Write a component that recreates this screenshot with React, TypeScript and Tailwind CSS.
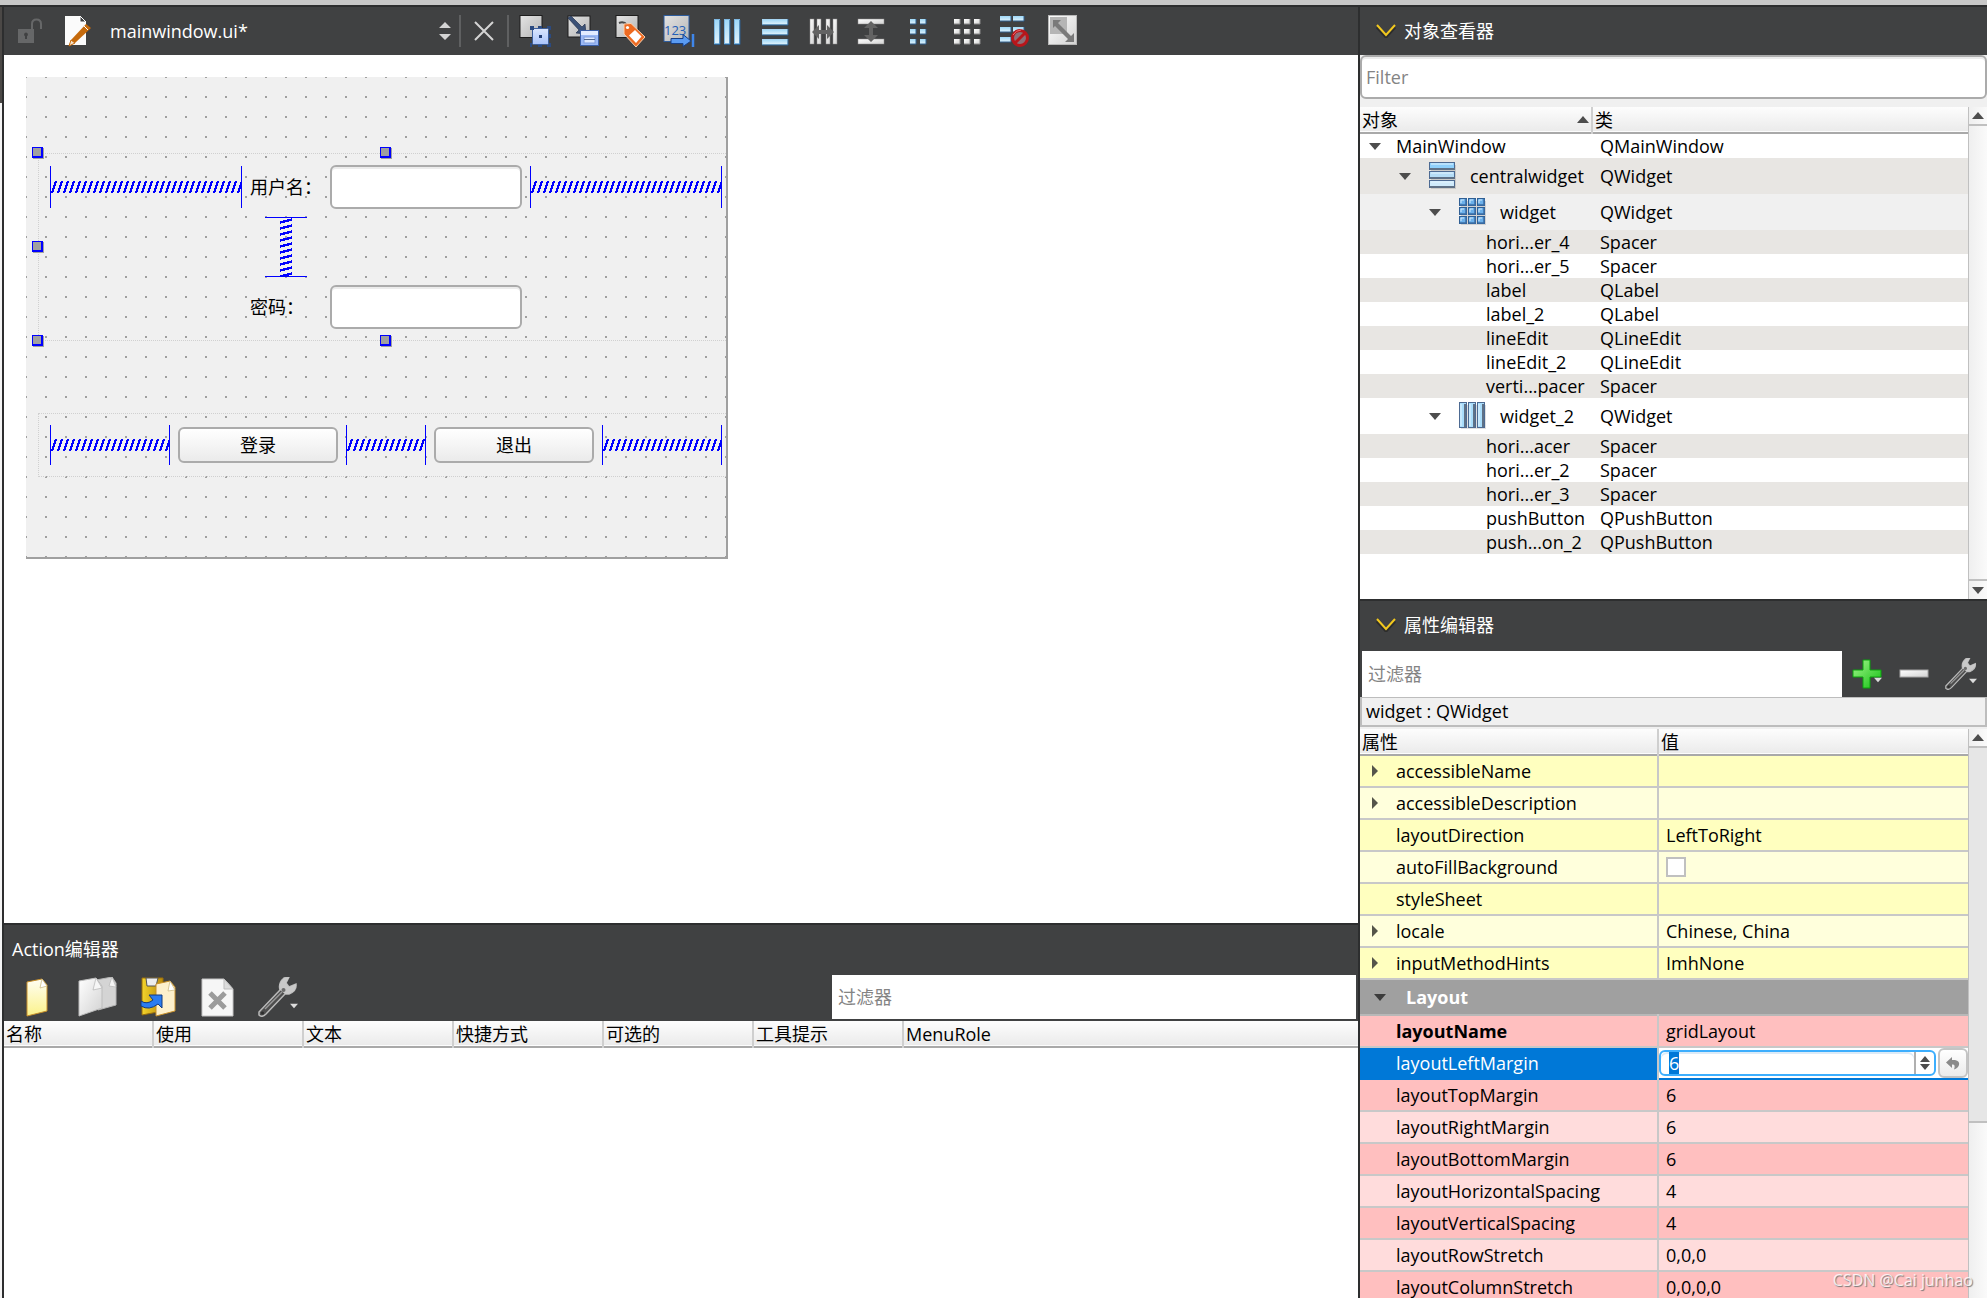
import { useEffect, useRef } from "react";

interface TreeItem {
  name: string;
  type: string;
  level: number;
  icon?: "rows" | "grid" | "cols";
}

interface Property {
  name: string;
  value: string;
  expandable?: boolean;
  kind?: "check";
}

const treeItems: TreeItem[] = [
  { name: "MainWindow", type: "QMainWindow", level: 0 },
  { name: "centralwidget", type: "QWidget", level: 1, icon: "rows" },
  { name: "widget", type: "QWidget", level: 2, icon: "grid" },
  { name: "hori...er_4", type: "Spacer", level: 3 },
  { name: "hori...er_5", type: "Spacer", level: 3 },
  { name: "label", type: "QLabel", level: 3 },
  { name: "label_2", type: "QLabel", level: 3 },
  { name: "lineEdit", type: "QLineEdit", level: 3 },
  { name: "lineEdit_2", type: "QLineEdit", level: 3 },
  { name: "verti...pacer", type: "Spacer", level: 3 },
  { name: "widget_2", type: "QWidget", level: 2, icon: "cols" },
  { name: "hori...acer", type: "Spacer", level: 3 },
  { name: "hori...er_2", type: "Spacer", level: 3 },
  { name: "hori...er_3", type: "Spacer", level: 3 },
  { name: "pushButton", type: "QPushButton", level: 3 },
  { name: "push...on_2", type: "QPushButton", level: 3 },
];

const widgetProps: Property[] = [
  { name: "accessibleName", value: "", expandable: true },
  { name: "accessibleDescription", value: "", expandable: true },
  { name: "layoutDirection", value: "LeftToRight" },
  { name: "autoFillBackground", value: "", kind: "check" },
  { name: "styleSheet", value: "" },
  { name: "locale", value: "Chinese, China", expandable: true },
  { name: "inputMethodHints", value: "ImhNone", expandable: true },
];

const layoutProps: Property[] = [
  { name: "layoutTopMargin", value: "6" },
  { name: "layoutRightMargin", value: "6" },
  { name: "layoutBottomMargin", value: "6" },
  { name: "layoutHorizontalSpacing", value: "4" },
  { name: "layoutVerticalSpacing", value: "4" },
  { name: "layoutRowStretch", value: "0,0,0" },
  { name: "layoutColumnStretch", value: "0,0,0,0" },
];

const actionColumns = ["名称", "使用", "文本", "快捷方式", "可选的", "工具提示"];

const HEADER = "h-[26px] bg-linear-to-b from-[#fdfdfd] to-[#ebebeb] border-b-2 border-[#a9a9a9]";

/* ---------- small glyphs ---------- */

function Triangle({ dir, className = "" }: { dir: "up" | "down" | "right"; className?: string }) {
  if (dir === "right") {
    return (
      <svg width="6" height="12" viewBox="0 0 6 12" className={className}>
        <path d="M0 0L6 6L0 12Z" fill="currentColor" />
      </svg>
    );
  }
  return (
    <svg width="12" height="7" viewBox="0 0 12 7" className={className}>
      <path d={dir === "up" ? "M0 7L6 0L12 7Z" : "M0 0H12L6 7Z"} fill="currentColor" />
    </svg>
  );
}

function Chevron() {
  return (
    <svg width="20" height="14" viewBox="0 0 20 14" fill="none">
      <path d="M1 2L10 12L19 2" stroke="#2c2c2c" strokeWidth="3" transform="translate(0 1)" />
      <path d="M1 1L10 11L19 1" stroke="#f2c81e" strokeWidth="2" />
    </svg>
  );
}

function Defs() {
  return (
    <svg width="0" height="0" className="absolute" aria-hidden="true">
      <defs>
        <linearGradient id="blueBar" x1="0" y1="0" x2="0" y2="1">
          <stop offset="0" stopColor="#9fd8f8" />
          <stop offset="1" stopColor="#e2f3fc" />
        </linearGradient>
        <linearGradient id="greyBox" x1="0" y1="0" x2="1" y2="1">
          <stop offset="0" stopColor="#e4e4e4" />
          <stop offset="1" stopColor="#b4b4b4" />
        </linearGradient>
        <linearGradient id="lightBox" x1="0" y1="0" x2="1" y2="1">
          <stop offset="0" stopColor="#ffffff" />
          <stop offset="1" stopColor="#d2d2d2" />
        </linearGradient>
        <linearGradient id="blueBox" x1="0" y1="0" x2="0" y2="1">
          <stop offset="0" stopColor="#dbe6fd" />
          <stop offset="1" stopColor="#a9c3fb" />
        </linearGradient>
        <linearGradient id="yellowPage" x1="0" y1="0" x2="0" y2="1">
          <stop offset="0" stopColor="#fffef4" />
          <stop offset="1" stopColor="#fbf28a" />
        </linearGradient>
        <linearGradient id="gold" x1="0" y1="0" x2="1" y2="0">
          <stop offset="0" stopColor="#f4d42c" />
          <stop offset="1" stopColor="#b98a0a" />
        </linearGradient>
        <linearGradient id="green" x1="0" y1="0" x2="1" y2="1">
          <stop offset="0" stopColor="#a4f58c" />
          <stop offset="1" stopColor="#0fbf10" />
        </linearGradient>
        <pattern id="hatchH" width="6" height="12" patternUnits="userSpaceOnUse">
          <path d="M1 12L5 0" stroke="#0000ff" strokeWidth="2" shapeRendering="crispEdges" />
        </pattern>
        <pattern id="hatchV" width="12" height="6" patternUnits="userSpaceOnUse">
          <path d="M0 4.5L12 1.5" stroke="#0000ff" strokeWidth="2.5" shapeRendering="crispEdges" />
        </pattern>
      </defs>
    </svg>
  );
}

/* ---------- form toolbar icons, all 32x32 ---------- */

function EditWidgetsIcon() {
  return (
    <>
      <rect x="1" y="0.5" width="22" height="22" fill="url(#greyBox)" stroke="#1d1d1d" />
      <rect x="13.5" y="13.5" width="16" height="16" rx="1" fill="url(#blueBox)" stroke="#3d5f9c" />
      <path
        d="M11 11h4v4h-4zM19 11h4v2h-4zM28 11h4v4h-2v-2h-2zM30 19h2v4h-2zM11 28h2v4h-2zM19 30h4v2h-4zM28 30h2v-2h2v4h-4z"
        fill="#2b4a80"
      />
      <rect x="20" y="20" width="3" height="3" fill="#223e75" />
    </>
  );
}

function SignalsIcon() {
  return (
    <>
      <rect x="1" y="1" width="22" height="21" fill="url(#greyBox)" stroke="#1d1d1d" />
      <path d="M1 3L4 1L15 12L18 9L19 19L9 18L12 15Z" fill="#3c5277" stroke="#26344f" strokeWidth="0.7" />
      <rect x="13.5" y="15.5" width="18" height="15" fill="#9bb8f4" stroke="#3a5ea6" />
      <rect x="14" y="16" width="17" height="4" fill="#e2ebff" />
      <rect x="17" y="22" width="11" height="6" fill="#dde7fd" stroke="#7f9dde" />
      <path d="M17 24.5H28" stroke="#52688f" />
    </>
  );
}

function BuddiesIcon() {
  return (
    <>
      <rect x="1" y="0.5" width="22" height="22" fill="url(#greyBox)" stroke="#1d1d1d" />
      <path d="M4 8Q9 6 12 10V19" stroke="#4a4a4a" strokeWidth="2" fill="none" />
      <path d="M9 9L16 8.5L30 22L21 32L9 19Z" fill="#ee6a21" stroke="#fbd0ae" />
      <path d="M20 15L26.5 21.5L21 28L14 20.5Z" fill="#fff" />
      <circle cx="12.5" cy="12.5" r="1.6" fill="#fff" />
    </>
  );
}

function TabOrderIcon() {
  return (
    <>
      <rect x="1" y="0.5" width="25" height="26" fill="url(#greyBox)" stroke="#2e5d9e" />
      <text x="1" y="20" fontSize="13" fill="#2360b8" fontFamily="Open Sans, sans-serif">
        123
      </text>
      <path d="M8 23.5H20V19.5L28 26L20 31.5V28.5H8Z" fill="#5a9bf2" stroke="#173f86" />
      <path d="M30 19V32" stroke="#3f86ea" strokeWidth="2.5" />
    </>
  );
}

function ColumnsIcon() {
  return (
    <>
      {[3, 13, 23].map((x) => (
        <g key={x}>
          <rect x={x + 0.5} y="4.5" width="5" height="24" fill="url(#blueBar)" stroke="#7fb9e4" />
          <path d={`M${x + 6} 5V29.5H${x}`} stroke="#2e608f" fill="none" />
        </g>
      ))}
    </>
  );
}

function RowsIcon() {
  return (
    <>
      {[4, 14, 24].map((y) => (
        <g key={y}>
          <rect x="3.5" y={y + 0.5} width="25" height="5" fill="url(#blueBar)" stroke="#a7d5f2" />
          <path d={`M29 ${y}V${y + 6}H3`} stroke="#2e608f" fill="none" />
        </g>
      ))}
    </>
  );
}

function SplitHIcon() {
  return (
    <>
      {[3, 10, 19, 26].map((x) => (
        <rect key={x} x={x} y="4" width="4" height="25" fill="url(#lightBox)" stroke="#8d8d8d" strokeWidth="0.5" />
      ))}
      <path d="M5 17L12 10V15H20V10L27 17L20 24V19H12V24Z" fill="#636363" />
    </>
  );
}

function SplitVIcon() {
  return (
    <>
      {[4, 24].map((y) => (
        <rect key={y} x="3" y={y} width="26" height="5" fill="url(#lightBox)" stroke="#8d8d8d" strokeWidth="0.5" />
      ))}
      <path d="M16 6L23 13H18V20H23L16 27L9 20H14V13H9Z" fill="#636363" />
    </>
  );
}

function Cells({ xs, ys, w, h, fill, edge }: { xs: number[]; ys: number[]; w: number; h: number; fill: string; edge: string }) {
  return (
    <>
      {ys.map((y) =>
        xs.map((x) => (
          <g key={`${x}-${y}`}>
            <rect x={x} y={y} width={w} height={h} fill={fill} />
            <path d={`M${x + w} ${y}V${y + h}H${x}`} stroke={edge} fill="none" />
          </g>
        ))
      )}
    </>
  );
}

function BreakLayoutIcon() {
  return (
    <>
      <Cells xs={[1, 14]} ys={[1, 12, 22]} w={11} h={5} fill="url(#blueBar)" edge="#2e608f" />
      <circle cx="21" cy="23" r="7.5" fill="#8d6f78" stroke="#b8161b" strokeWidth="3" />
      <path d="M16 28L26 18" stroke="#b8161b" strokeWidth="3" />
      <path d="M14 20Q17 15 22 15" stroke="#ee6a6a" strokeWidth="1" fill="none" />
    </>
  );
}

function AdjustSizeIcon() {
  return (
    <>
      <rect x="1.5" y="0.5" width="28" height="29" fill="url(#lightBox)" stroke="#b9b9b9" />
      <rect x="3" y="2" width="17" height="17" fill="#b5b5b5" />
      <path d="M6 5H14L11 8L24 21L27 18V27H18L21 24L8 11L6 13Z" fill="#7a7a7a" />
    </>
  );
}

const formTools = [
  { label: "编辑控件", icon: <EditWidgetsIcon /> },
  { label: "编辑信号/槽", icon: <SignalsIcon /> },
  { label: "编辑伙伴", icon: <BuddiesIcon /> },
  { label: "编辑Tab顺序", icon: <TabOrderIcon /> },
  { label: "水平布局", icon: <ColumnsIcon /> },
  { label: "垂直布局", icon: <RowsIcon /> },
  { label: "水平分裂器布局", icon: <SplitHIcon /> },
  { label: "垂直分裂器布局", icon: <SplitVIcon /> },
  {
    label: "表单布局",
    icon: <Cells xs={[7, 17]} ys={[4, 14, 24]} w={6} h={5} fill="url(#blueBar)" edge="#2e608f" />,
  },
  {
    label: "栅格布局",
    icon: <Cells xs={[3, 13, 23]} ys={[4, 14, 24]} w={6} h={5} fill="url(#lightBox)" edge="#8a8a8a" />,
  },
  { label: "打破布局", icon: <BreakLayoutIcon /> },
  { label: "调整大小", icon: <AdjustSizeIcon /> },
];

function Wrench({ size }: { size: number }) {
  return (
    <svg width={size} height={size} viewBox="0 0 40 40">
      <path
        d="M1 35L22 13Q20 6 26 1L31 0L28 6L31 10L38 7Q39 14 31 17L27 17L8 37Q4 41 1 38Z"
        fill="#4d4d4d"
        stroke="#b9b9b9"
        strokeWidth="1.5"
      />
      <path d="M22 13Q20 6 26 1L31 0L28 6L31 10L38 7Q39 14 31 17L27 17Z" fill="#c9c9c9" />
      <path d="M7 32L24 15" stroke="#9a9a9a" strokeWidth="1.5" />
      <circle cx="25.5" cy="13" r="2" fill="#6a6a6a" />
      <circle cx="4.5" cy="36" r="1.5" fill="#2c2c2c" />
    </svg>
  );
}

function NewActionIcon() {
  return (
    <svg width="40" height="40" viewBox="0 0 40 40">
      <path d="M9 5L24 2L29 8V34L9 39Z" fill="url(#yellowPage)" stroke="#c8902a" />
      <path d="M24 2L22 11L29 9Z" fill="#fff" stroke="#c9b47a" strokeWidth="0.7" />
    </svg>
  );
}

function CopyIcon() {
  return (
    <svg width="40" height="40" viewBox="0 0 40 40">
      <path d="M18 3L34 0L38 6V28L20 33Z" fill="#d4d4d4" stroke="#b5b5b5" />
      <path d="M34 0L31 9L38 10Z" fill="#f4f4f4" stroke="#b5b5b5" strokeWidth="0.7" />
      <path d="M1 4L18 1L24 9V31L1 39Z" fill="url(#lightBox)" stroke="#bcbcbc" />
      <path d="M18 1L15 13L24 11Z" fill="#f6f6f6" stroke="#b5b5b5" strokeWidth="0.7" />
    </svg>
  );
}

function PasteIcon() {
  return (
    <svg width="40" height="40" viewBox="0 0 40 40">
      <path d="M4 1L25 1V34L4 38Z" fill="url(#gold)" stroke="#9a6f0c" />
      <path d="M8 1H20L18 9H9Z" fill="#ececec" stroke="#555" />
      <path d="M18 7L32 4L37 10V34L18 39Z" fill="#fdf0cc" stroke="#c8902a" />
      <path d="M32 4L30 14L37 13Z" fill="#fff" stroke="#c9b47a" strokeWidth="0.7" />
      <path d="M3 24Q9 28 15 23L11 18H24V31L20 27Q11 34 3 29Z" fill="#2b7cf0" stroke="#123b80" />
    </svg>
  );
}

function DeleteIcon() {
  return (
    <svg width="40" height="40" viewBox="0 0 40 40">
      <path d="M4 2H26L35 12V39H4Z" fill="#f6f6f6" stroke="#c4c4c4" />
      <path d="M26 2V12H35Z" fill="#dcdcdc" stroke="#bdbdbd" />
      <path d="M12 16L27 31M27 16L12 31" stroke="#9b9b9b" strokeWidth="5" />
    </svg>
  );
}

function TreeIcon({ kind }: { kind: "rows" | "grid" | "cols" }) {
  return (
    <svg width="28" height="28" viewBox="0 0 28 28" className="shrink-0">
      <rect x="2" y="3" width="25" height="24" fill="#000" fillOpacity="0.12" />
      {kind === "rows" &&
        [0, 9, 18].map((y, i) => (
          <g key={y}>
            <rect x="0.5" y={y + 0.5} width="25" height="7" fill={["#8fd0fb", "#b5ddf6", "#cfeafa"][i]} stroke="#4d6a92" />
            <path d={`M2 ${y + 2}H24`} stroke="#e3f4fe" />
            <path d={`M1 ${y + 7}H26`} stroke="#5f7186" strokeWidth="2" />
          </g>
        ))}
      {kind === "cols" &&
        [0, 9, 18].map((x) => (
          <g key={x}>
            <rect x={x + 0.5} y="0.5" width="7" height="25" fill="#a9ddfb" stroke="#4d6a92" />
            <path d={`M${x + 6} 2V25`} stroke="#5f7186" strokeWidth="2" />
            <path d={`M${x + 2} 2V24`} stroke="#e3f4fe" />
          </g>
        ))}
      {kind === "grid" &&
        [0, 9, 18].map((y) =>
          [0, 9, 18].map((x) => (
            <g key={`${x}-${y}`}>
              <rect x={x + 0.5} y={y + 0.5} width="7" height="7" fill="#6cb0ea" stroke="#2f5f94" />
              <path d={`M${x + 7} ${y + 1}V${y + 7}H${x + 1}`} stroke="#3b6ea5" strokeWidth="1.5" fill="none" />
              <path d={`M${x + 2} ${y + 5}V${y + 2}H${x + 5}`} stroke="#cfe9fc" fill="none" />
            </g>
          ))
        )}
    </svg>
  );
}

/* ---------- form canvas ---------- */

function HSpacer({ className = "" }: { className?: string }) {
  return (
    <div className={`flex items-center border-x border-[#0000ff] ${className}`}>
      <svg className="w-full h-3">
        <rect width="100%" height="12" fill="url(#hatchH)" />
      </svg>
    </div>
  );
}

function VSpacer() {
  return (
    <div className="flex w-[42px] h-[60px] justify-center justify-self-center border-y border-[#0000ff]">
      <svg className="h-full w-3">
        <rect width="12" height="100%" fill="url(#hatchV)" />
      </svg>
    </div>
  );
}

function Handle({ className }: { className: string }) {
  return (
    <div
      className={`absolute size-[11px] border border-r-2 border-b-2 border-[#0000ff] bg-[#a0a0a0] shadow-[1px_1px_0_#a0a0a0] ${className}`}
    />
  );
}

function LineEdit({ label, id }: { label: string; id: string }) {
  return (
    <>
      <label htmlFor={id} className="self-center whitespace-nowrap">
        {label}
      </label>
      <input
        id={id}
        type="text"
        className="h-11 w-full rounded-md border-2 border-[#ababab] bg-white px-2 shadow-[inset_0_2px_0_#ececec] outline-none"
      />
    </>
  );
}

function PushButton({ children }: { children: string }) {
  return (
    <button
      type="button"
      className="h-9 w-40 rounded-md border-2 border-[#ababab] bg-linear-to-b from-white to-[#ebebeb]"
    >
      {children}
    </button>
  );
}

function FormPreview() {
  return (
    <div className="w-[702px] overflow-hidden border-r-2 border-b-2 border-[#a0a0a0] bg-[#f0f0f0] bg-[conic-gradient(at_2px_2px,transparent_75%,#a0a0a0_0)] bg-size-[20px_20px] bg-position-[-1px_-1px] pt-[76px] pb-20 pl-3">
      <div className="relative w-[694px] border border-dotted border-[#d0d0d0] py-[11px] pl-[11px]">
        <div className="grid grid-cols-[192px_72px_192px_192px] gap-2">
          <HSpacer className="h-[42px] self-center" />
          <LineEdit label="用户名：" id="user-name" />
          <HSpacer className="h-[42px] self-center" />
          <div />
          <VSpacer />
          <div />
          <div />
          <div />
          <LineEdit label="密码：" id="user-password" />
        </div>
        <Handle className="-top-[7px] -left-[7px]" />
        <Handle className="-top-[7px] left-[341px]" />
        <Handle className="top-[87px] -left-[7px]" />
        <Handle className="-bottom-[6px] -left-[7px]" />
        <Handle className="-bottom-[6px] left-[341px]" />
      </div>
      <div className="mt-[72px] flex w-[694px] items-center gap-2 border border-dotted border-[#d0d0d0] py-[11px] pl-[11px]">
        <HSpacer className="h-10 w-[120px]" />
        <PushButton>登录</PushButton>
        <HSpacer className="h-10 w-20" />
        <PushButton>退出</PushButton>
        <HSpacer className="h-10 w-[120px]" />
      </div>
    </div>
  );
}

function FormToolbar() {
  return (
    <div className="flex h-12 shrink-0 items-center bg-[#404142]" role="toolbar">
      <button type="button" aria-label="锁定" className="ml-3.5">
        <svg width="26" height="26" viewBox="0 0 26 26">
          <path d="M14 12V6Q14 1.5 18.5 1.5T23 6V11" stroke="#666768" strokeWidth="2" fill="none" />
          <path d="M0 11H16V25H0ZM8 14.5a2 2 0 0 0-1 3.7V21h2v-2.8a2 2 0 0 0-1-3.7Z" fill="#666768" fillRule="evenodd" />
        </svg>
      </button>
      <svg width="30" height="32" viewBox="0 0 30 32" className="ml-5">
        <path d="M1 1H16L22 7V30H1Z" fill="#fbfbfb" />
        <path d="M16 1V7H22Z" fill="#404142" stroke="#fff" />
        <path d="M5 31L7 25L22 9L27 13L11 28Z" fill="#c56a0c" />
        <path d="M5 31L7 25L11 28Z" fill="#f6e4cc" stroke="#c56a0c" />
        <path d="M20 11L24 15" stroke="#fff" />
      </svg>
      <button type="button" className="ml-4 flex flex-1 max-w-[341px] items-center justify-between text-white">
        mainwindow.ui*
        <svg width="12" height="20" viewBox="0 0 12 20">
          <path d="M0 7L6 1L12 7ZM0 13H12L6 19Z" fill="#d4d4d4" />
        </svg>
      </button>
      <div className="ml-2 h-8 w-0.5 bg-[#5f6061]" />
      <button type="button" aria-label="关闭" className="ml-3">
        <svg width="22" height="22" viewBox="0 0 22 22">
          <path d="M2 2L20 20M20 2L2 20" stroke="#d4d4d4" strokeWidth="2" />
        </svg>
      </button>
      <div className="ml-3 h-8 w-0.5 bg-[#5f6061]" />
      <div className="ml-2.5 flex gap-4">
        {formTools.map((tool) => (
          <button key={tool.label} type="button" aria-label={tool.label}>
            <svg width="32" height="32" viewBox="0 0 32 32">
              {tool.icon}
            </svg>
          </button>
        ))}
      </div>
    </div>
  );
}

function ActionEditor() {
  return (
    <section className="flex h-[375px] shrink-0 flex-col border-t-2 border-[#2d2e2f] bg-white">
      <div className="bg-[#404142]">
        <h2 className="flex h-12 items-center pl-2 text-white">Action编辑器</h2>
        <div className="flex h-12 items-center justify-between">
          <div className="flex items-center gap-5 pl-3.5">
            <button type="button" aria-label="新建">
              <NewActionIcon />
            </button>
            <button type="button" aria-label="复制">
              <CopyIcon />
            </button>
            <button type="button" aria-label="粘贴">
              <PasteIcon />
            </button>
            <button type="button" aria-label="删除">
              <DeleteIcon />
            </button>
            <button type="button" aria-label="配置" className="flex items-end">
              <Wrench size={40} />
              <Triangle dir="down" className="-ml-2 mb-2 h-1.5 w-2 text-[#dcdcdc]" />
            </button>
          </div>
          <input
            type="text"
            aria-label="过滤器"
            placeholder="过滤器"
            className="mr-0.5 h-11 w-[524px] bg-white px-1.5 outline-none placeholder:text-[#848484]"
          />
        </div>
      </div>
      <table className="w-full table-fixed text-left">
        <thead>
          <tr className={HEADER}>
            {actionColumns.map((name) => (
              <th
                key={name}
                className="w-[150px] border-r-2 border-r-[#cfcfcf] pl-0.5 font-normal leading-6 first:w-[149px]"
              >
                {name}
              </th>
            ))}
            <th className="pl-0.5 font-normal leading-6">MenuRole</th>
          </tr>
        </thead>
      </table>
    </section>
  );
}

/* ---------- right docks ---------- */

function DockTitle({ children }: { children: string }) {
  return (
    <h2 className="flex h-12 shrink-0 items-center gap-2 bg-[#404142] pl-4 text-white">
      <Chevron />
      {children}
    </h2>
  );
}

function ScrollBar({ thumb }: { thumb?: boolean }) {
  return (
    <div className="flex w-[19px] shrink-0 flex-col items-center border-l border-[#c0c0c0] bg-linear-to-r from-[#efefef] to-[#fafafa] text-[#4d4d4d]">
      <div className="flex h-[19px] w-full shrink-0 items-center justify-center border-b-2 border-[#c0c0c0]">
        <Triangle dir="up" />
      </div>
      {thumb ? (
        <div className="h-[375px] w-full border-b-2 border-[#c0c0c0] bg-[#e6e6e6]" />
      ) : (
        <div className="mt-auto flex h-5 w-full items-center justify-center border-t-2 border-[#c0c0c0]">
          <Triangle dir="down" />
        </div>
      )}
    </div>
  );
}

const indents = ["pl-[9px]", "pl-[39px]", "pl-[69px]", "pl-[126px]"];

function rowColor(item: TreeItem, index: number) {
  if (item.name === "widget") return "bg-[#f0f0f0]";
  return index % 2 ? "bg-[#e8e6e3]" : "bg-white";
}

function ObjectInspector() {
  return (
    <section className="flex h-[592px] shrink-0 flex-col bg-[#f0f0f0]">
      <DockTitle>对象查看器</DockTitle>
      <input
        type="text"
        aria-label="Filter"
        placeholder="Filter"
        className="mb-2 h-11 shrink-0 rounded-md border-2 border-[#ababab] bg-white px-1 shadow-[inset_0_2px_0_#ececec] outline-none placeholder:text-[#848484]"
      />
      <div className="flex min-h-0 flex-1 bg-white">
        <div className="min-w-0 flex-1">
          <table className="w-full table-fixed text-left leading-6">
            <thead>
              <tr className={HEADER}>
                <th className="w-[232px] border-r-2 border-r-[#cfcfcf] pr-0.5 pl-0.5 font-normal">
                  <span className="flex items-center justify-between">
                    对象
                    <Triangle dir="up" className="text-[#4d4d4d]" />
                  </span>
                </th>
                <th className="pl-0.5 font-normal">类</th>
              </tr>
            </thead>
            <tbody>
              {treeItems.map((item, i) => (
                <tr key={item.name} className={`${item.icon ? "h-9" : "h-6"} ${rowColor(item, i)}`}>
                  <td className={`whitespace-nowrap ${indents[item.level]}`}>
                    <span className="flex items-center">
                      {item.level < 3 && <Triangle dir="down" className="mr-[15px] shrink-0 text-[#4d4d4d]" />}
                      {item.icon && (
                        <span className="mr-[13px] ml-[3px]">
                          <TreeIcon kind={item.icon} />
                        </span>
                      )}
                      {item.name}
                    </span>
                  </td>
                  <td className="pl-2">{item.type}</td>
                </tr>
              ))}
            </tbody>
          </table>
        </div>
        <ScrollBar />
      </div>
    </section>
  );
}

function PropertyRow({ prop, color, bold }: { prop: Property; color: string; bold?: boolean }) {
  return (
    <tr className={`h-8 border-b-2 border-[#c8c8c8] ${color}`}>
      <td className="border-r-2 border-[#c8c8c8] pl-3">
        <span className="flex items-center">
          <span className="w-6">{prop.expandable && <Triangle dir="right" className="text-[#55554a]" />}</span>
          <span className={bold ? "font-bold" : ""}>{prop.name}</span>
        </span>
      </td>
      <td className="pl-[7px]">
        {prop.kind === "check" ? (
          <input
            type="checkbox"
            aria-label={prop.name}
            className="block size-5 appearance-none border-2 border-[#c0c0c0] bg-white"
          />
        ) : (
          prop.value
        )}
      </td>
    </tr>
  );
}

function MarginRow() {
  const ref = useRef<HTMLInputElement>(null);

  useEffect(() => {
    ref.current?.focus();
    ref.current?.select();
  }, []);

  return (
    <tr className="h-8 border-b-2 border-[#0078d7] bg-[#0078d7] text-white">
      <td className="border-r-2 border-[#c8c8c8] pl-9">
        <label htmlFor="left-margin">layoutLeftMargin</label>
      </td>
      <td className="bg-white">
        <span className="flex h-[30px] items-center">
          <span className="flex h-[26px] flex-1 items-center rounded-md border-2 border-[#3daefd] text-[#4d4d4d]">
            <input
              ref={ref}
              id="left-margin"
              type="text"
              defaultValue="6"
              className="h-full min-w-0 flex-1 rounded-md pl-2 text-black shadow-[inset_0_2px_0_#dcebf8] outline-none selection:bg-[#0078d7] selection:text-white"
            />
            <button type="button" aria-label="步进" className="flex h-full w-5 items-center justify-center border-l-2 border-[#b0b0b0]">
              <svg width="10" height="14" viewBox="0 0 10 14">
                <path d="M0 6L5 0L10 6ZM0 8H10L5 14Z" fill="#4d4d4d" />
              </svg>
            </button>
          </span>
          <button
            type="button"
            aria-label="重置"
            className="ml-0.5 flex h-[30px] w-[30px] items-center justify-center rounded-md border-2 border-[#c4c4c4] bg-linear-to-b from-white to-[#ebebeb]"
          >
            <svg width="14" height="13" viewBox="0 0 14 13">
              <path d="M6 0V3H9Q14 4 13 8Q12 11 8 12.5Q10 7 6 7.5V11L0 5.5Z" fill="#8a8a8a" />
            </svg>
          </button>
        </span>
      </td>
    </tr>
  );
}

function PropertyEditor() {
  return (
    <section className="flex min-h-0 flex-1 flex-col border-t-2 border-[#2d2e2f] bg-[#f0f0f0]">
      <div className="bg-[#404142]">
        <DockTitle>属性编辑器</DockTitle>
        <div className="flex items-center pt-0.5 pl-0.5">
          <input
            type="text"
            aria-label="过滤器"
            placeholder="过滤器"
            className="h-[46px] min-w-0 flex-1 bg-white px-1.5 outline-none placeholder:text-[#848484]"
          />
          <div className="flex items-center px-2.5">
            <button type="button" aria-label="添加" className="flex items-end">
              <svg width="30" height="30" viewBox="0 0 30 30">
                <path d="M11 1H18V11H29V18H18V29H11V18H1V11H11Z" fill="url(#green)" stroke="#0aa30c" />
              </svg>
              <Triangle dir="down" className="-ml-2 mb-1.5 h-1.5 w-2 text-[#dcdcdc]" />
            </button>
            <button type="button" aria-label="移除" className="ml-[17px]">
              <svg width="30" height="30" viewBox="0 0 30 30">
                <rect x="1" y="11" width="28" height="7" fill="url(#lightBox)" stroke="#a5a5a5" />
              </svg>
            </button>
            <button type="button" aria-label="配置" className="ml-4 flex items-end">
              <Wrench size={32} />
              <Triangle dir="down" className="-ml-2 mb-1.5 h-1.5 w-2 text-[#dcdcdc]" />
            </button>
          </div>
        </div>
      </div>
      <p className="mb-0.5 h-[30px] border-2 border-t border-[#bdbdbd] bg-[#f0f0f0] pl-1 leading-[27px]">widget : QWidget</p>
      <div className="flex min-h-0 flex-1 bg-white">
        <div className="min-w-0 flex-1 overflow-hidden">
          <table className="w-full table-fixed text-left leading-6">
            <thead>
              <tr className={HEADER}>
                <th className="w-[298px] border-r-2 border-r-[#cfcfcf] pl-0.5 font-normal">属性</th>
                <th className="pl-0.5 font-normal">值</th>
              </tr>
            </thead>
            <tbody>
              {widgetProps.map((prop, i) => (
                <PropertyRow key={prop.name} prop={prop} color={i % 2 ? "bg-[#ffffdc]" : "bg-[#ffffbf]"} />
              ))}
              <tr className="h-9 border-b-2 border-[#b8b8b8] bg-[#a0a0a0]">
                <td colSpan={2} className="pl-3.5">
                  <span className="flex items-center gap-5 font-bold text-white">
                    <Triangle dir="down" className="text-[#3c3c3c]" />
                    Layout
                  </span>
                </td>
              </tr>
              <PropertyRow prop={{ name: "layoutName", value: "gridLayout" }} color="bg-[#ffbfbf]" bold />
              <MarginRow />
              {layoutProps.map((prop, i) => (
                <PropertyRow key={prop.name} prop={prop} color={i % 2 ? "bg-[#ffdcdc]" : "bg-[#ffbfbf]"} />
              ))}
            </tbody>
          </table>
        </div>
        <ScrollBar thumb />
      </div>
    </section>
  );
}

export default function App() {
  return (
    <div className="relative flex h-screen flex-col overflow-hidden bg-white font-['Open_Sans','Noto_Sans_CJK_SC',sans-serif] text-[18px] leading-6 text-black">
      <Defs />
      <div className="h-[5px] shrink-0 bg-[#c8c8c8]" />
      <div className="h-0.5 shrink-0 bg-[#2d2e2f]" />
      <div className="flex min-h-0 flex-1">
        <div className="w-0.5 bg-[#f4f4f4]">
          <div className="h-24 bg-[#4b4846]" />
        </div>
        <main className="flex min-w-0 flex-1 flex-col border-x-2 border-[#2d2e2f]">
          <FormToolbar />
          <div className="min-h-0 flex-1 overflow-hidden bg-white pt-[22px] pl-[22px]">
            <FormPreview />
          </div>
          <ActionEditor />
        </main>
        <aside className="flex w-[627px] shrink-0 flex-col">
          <ObjectInspector />
          <PropertyEditor />
        </aside>
      </div>
      <div className="pointer-events-none absolute right-3.5 bottom-1.5 text-base text-white/80 [text-shadow:1px_1px_1px_#777]">
        CSDN @Cai junhao
      </div>
    </div>
  );
}
